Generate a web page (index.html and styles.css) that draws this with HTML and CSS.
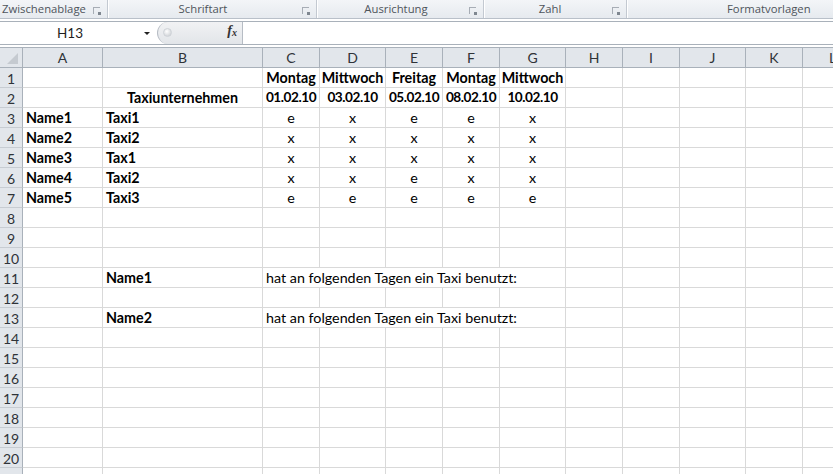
FILE: index.html
```html
<!DOCTYPE html>
<html lang="de">
<head>
  <meta charset="UTF-8" />
  <title>Taxi Tabelle</title>
  <link rel="stylesheet" href="styles.css">
</head>
<body>
  <!-- ribbon group labels -->
  <div class="ribbon">
    <div class="group g-clip"><span class="glabel left">Zwischenablage</span><span class="launcher"></span></div>
    <div class="group g-font"><span class="glabel">Schriftart</span><span class="launcher"></span></div>
    <div class="group g-align"><span class="glabel">Ausrichtung</span><span class="launcher"></span></div>
    <div class="group g-num"><span class="glabel">Zahl</span><span class="launcher"></span></div>
    <div class="group g-style"><span class="glabel">Formatvorlagen</span></div>
  </div>

  <!-- name box + formula bar -->
  <div class="formula-bar">
    <div class="name-box">
      <span class="cell-ref">H13</span>
      <span class="dd-arrow"></span>
    </div>
    <div class="fx-pill">
      <span class="knob"></span>
      <span class="fx">f<sub>x</sub></span>
    </div>
    <div class="formula-input"></div>
  </div>

  <div class="sheet" id="sheet"></div>

  <script>
    const cols = ['A','B','C','D','E','F','G','H','I','J','K','L'];

    // row data: [A, B, C, D, E, F, G]
    const data = {
      1: { cells: ['', '', 'Montag', 'Mittwoch', 'Freitag', 'Montag', 'Mittwoch'], bold: true },
      2: { cells: ['', 'Taxiunternehmen', '01.02.10', '03.02.10', '05.02.10', '08.02.10', '10.02.10'], bold: true, centerB: true, dates: true },
      3: { cells: ['Name1', 'Taxi1', 'e', 'x', 'e', 'e', 'x'] },
      4: { cells: ['Name2', 'Taxi2', 'x', 'x', 'x', 'x', 'x'] },
      5: { cells: ['Name3', 'Tax1', 'x', 'x', 'x', 'x', 'x'] },
      6: { cells: ['Name4', 'Taxi2', 'x', 'x', 'e', 'x', 'x'] },
      7: { cells: ['Name5', 'Taxi3', 'e', 'e', 'e', 'e', 'e'] },
      11: { note: 'Name1' },
      13: { note: 'Name2' }
    };

    const sheet = document.getElementById('sheet');

    function add(cls, text) {
      const d = document.createElement('div');
      d.className = cls;
      if (text) d.textContent = text;
      sheet.appendChild(d);
      return d;
    }

    // header row
    add('corner').innerHTML = '<span class="tri"></span>';
    cols.forEach(c => add('col-hdr', c));

    for (let r = 1; r <= 21; r++) {
      // row 21 is only a sliver at the bottom edge, its number is out of view
      add('row-hdr', r < 21 ? String(r) : '');
      const row = data[r];

      if (row && row.note) {
        add('cell');
        add('cell bold', row.note);
        add('cell overflow', 'hat an folgenden Tagen ein Taxi benutzt:');
        for (let i = 7; i < cols.length; i++) add('cell');
        continue;
      }

      cols.forEach((c, i) => {
        let text = row && row.cells ? row.cells[i] : '';
        let cls = 'cell';
        if (i < 2) {
          // names and companies are bold, left aligned
          if (text) cls += ' bold';
          if (i === 1 && row && row.centerB) cls += ' center';
        } else if (text) {
          cls += ' center';
          if (row.bold) cls += ' bold';
          if (row.dates) cls += ' date';
        }
        add(cls, text);
      });
    }
  </script>
</body>
</html>
```

FILE: styles.css
```css
body {
  margin: 0;
  width: 833px;
  height: 474px;
  overflow: hidden;
  background: #ffffff;
  font-family: Lato, "Open Sans", sans-serif;
}

/* ---------- ribbon ---------- */
.ribbon {
  display: flex;
  height: 18px;
  background: linear-gradient(#f3f5f8, #e6eaef);
  border-bottom: 1px solid #b9c0c9;
  font-family: "Open Sans", sans-serif;
  font-size: 11.3px;
  color: #4e545b;
}

.group {
  position: relative;
  display: flex;
  align-items: center;
  justify-content: center;
  border-right: 1px solid #c3c9d1;
  box-shadow: 1px 0 0 #ffffff;
  box-sizing: border-box;
}

.g-clip { width: 108px; justify-content: flex-start; }
.g-font { width: 209px; }
.g-align { width: 167px; }
.g-num { width: 143px; }
.g-style {
  flex: 1;
  justify-content: flex-start;
  padding-left: 100px;
  border-right: none;
  box-shadow: none;
}

.glabel { line-height: 18px; padding-bottom: 1px; }
.glabel.left { padding-left: 2px; }
.g-font .glabel { margin-right: 18px; }
.g-align .glabel { margin-right: 8px; }
.g-num .glabel { margin-right: 10px; }

.launcher {
  position: absolute;
  right: 7px;
  top: 7px;
  width: 6px;
  height: 6px;
  border-left: 1px solid #a7adb5;
  border-top: 1px solid #a7adb5;
}

.launcher::after {
  content: "";
  position: absolute;
  right: -1px;
  bottom: -1px;
  width: 3px;
  height: 3px;
  background: #7f8790;
}

/* ---------- formula bar ---------- */
.formula-bar {
  display: flex;
  height: 22px;
  margin-top: 2px;
  margin-bottom: 2px;
  border-top: 1px solid #a9b1ba;
  border-bottom: 1px solid #a9b1ba;
  background: #ffffff;
}

.name-box {
  position: relative;
  width: 157px;
  display: flex;
  align-items: center;
  font-size: 13.5px;
  color: #1e1e1e;
}

.cell-ref {
  margin-left: 57px;
}

.dd-arrow {
  position: absolute;
  left: 144px;
  top: 10px;
  width: 0;
  height: 0;
  border-left: 3px solid transparent;
  border-right: 3px solid transparent;
  border-top: 3px solid #222;
}

.fx-pill {
  position: relative;
  width: 84px;
  background: linear-gradient(#f1f2f4, #e2e5e9);
  border-left: 1px solid #b6bcc4;
  border-radius: 11px 0 0 11px;
  border-right: 1px solid #b6bcc4;
}

.knob {
  position: absolute;
  left: 5px;
  top: 6px;
  width: 9px;
  height: 9px;
  border-radius: 50%;
  background: radial-gradient(circle at 40% 35%, #ffffff, #c4c8cd);
  border: 1px solid #cfd3d8;
  box-sizing: border-box;
}

.fx {
  position: absolute;
  right: 5px;
  top: 1px;
  font-family: "Liberation Serif", serif;
  font-style: italic;
  font-weight: bold;
  font-size: 14px;
  color: #333;
}

.fx sub {
  font-size: 10px;
  vertical-align: -1px;
}

.formula-input { flex: 1; }

/* ---------- sheet ---------- */
.sheet {
  display: grid;
  grid-template-columns: 23px 80px 160px 57px 66px 57px 57px 66px 57px 57px 66px 57px 60px;
  grid-auto-rows: 20px;
  border-top: 1px solid #a9b1ba;
  font-size: 14.3px;
  color: #000;
}

.corner,
.col-hdr,
.row-hdr {
  background: #e2e6eb;
  color: #2f3338;
  font-size: 14px;
  display: flex;
  align-items: center;
  justify-content: center;
  box-sizing: border-box;
}

.corner {
  position: relative;
  border-right: 1px solid #a9b1ba;
  border-bottom: 1px solid #a9b1ba;
}

.tri {
  position: absolute;
  right: 4px;
  bottom: 3px;
  width: 0;
  height: 0;
  border-left: 11px solid transparent;
  border-bottom: 11px solid #c5cad0;
}

.col-hdr {
  border-right: 1px solid #a9b1ba;
  border-bottom: 1px solid #a9b1ba;
}

.row-hdr {
  border-right: 1px solid #a9b1ba;
  border-bottom: 1px solid #c7ccd2;
  padding-top: 1px;
}

.cell {
  box-sizing: border-box;
  border-right: 1px solid #d9d9d9;
  border-bottom: 1px solid #d9d9d9;
  padding: 0 3px;
  line-height: 19px;
  white-space: nowrap;
  overflow: hidden;
}

.cell.bold { font-weight: bold; }
.cell.center { text-align: center; padding: 0; }
.cell.date { font-size: 13.6px; letter-spacing: -0.45px; }

.cell.overflow {
  grid-column: span 5;
}
```
